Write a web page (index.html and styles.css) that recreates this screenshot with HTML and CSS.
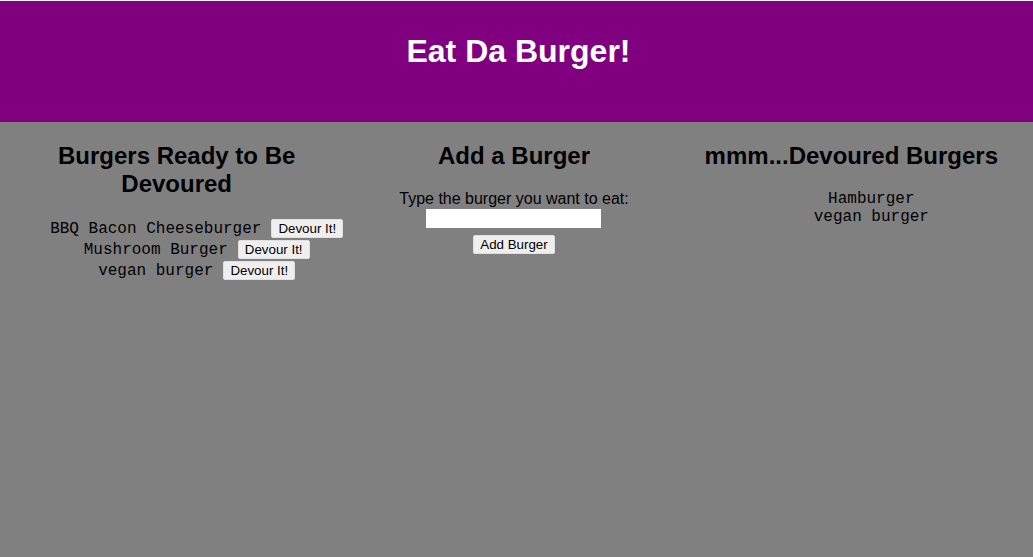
FILE: index.html
```html
<!DOCTYPE html>
<html>
<head>
<meta charset="utf-8">
<title>Eat Da Burger!</title>
<link rel="stylesheet" href="styles.css">
</head>
<body>
<header class="jumbotron">
  <h1 class="title">Eat Da Burger!</h1>
</header>
<main class="columns">
  <section class="col">
    <h2 class="col-title">Burgers Ready to Be Devoured</h2>
    <ul class="burger-list">
      <li class="burger-row"><span class="burger-name">BBQ Bacon Cheeseburger</span><button class="btn">Devour It!</button></li>
      <li class="burger-row"><span class="burger-name">Mushroom Burger</span><button class="btn">Devour It!</button></li>
      <li class="burger-row"><span class="burger-name">vegan burger</span><button class="btn">Devour It!</button></li>
    </ul>
  </section>
  <section class="col">
    <h2 class="col-title">Add a Burger</h2>
    <form class="add-form">
      <label class="add-label" for="burger">Type the burger you want to eat:</label>
      <input class="add-input" id="burger" type="text">
      <button class="btn" type="button">Add Burger</button>
    </form>
  </section>
  <section class="col">
    <h2 class="col-title">mmm...Devoured Burgers</h2>
    <ul class="eaten-list">
      <li class="eaten-item">Hamburger</li>
      <li class="eaten-item">vegan burger</li>
    </ul>
  </section>
</main>
</body>
</html>
```

FILE: styles.css
```css
html, body {
  margin: 0;
  padding: 0;
}
body {
  background: #808080;
  font-family: "Liberation Sans", Arial, sans-serif;
  color: #000;
  min-height: 100vh;
  border-top: 1px solid #f2f2f2;
  box-sizing: border-box;
}
.jumbotron {
  background: #800080;
  height: 121px;
  display: flex;
  justify-content: center;
  padding-left: 4px;
}
.title {
  margin: 32px 0 0;
  font-size: 32px;
  line-height: 37px;
  font-weight: bold;
  color: #fff;
}
.columns {
  display: grid;
  grid-template-columns: repeat(3, minmax(0, 1fr));
  padding: 0 13px 0 8px;
}
.col {
  text-align: center;
  min-width: 0;
}
.col-title {
  font-size: 24px;
  line-height: 28px;
  font-weight: bold;
  margin: 20px 0 20px;
}
.burger-list, .eaten-list {
  list-style: none;
  margin: 0;
  padding: 0 0 0 40px;
}
.burger-row {
  display: flex;
  justify-content: center;
  align-items: center;
  gap: 10px;
  height: 21px;
  white-space: nowrap;
}
.burger-row > * {
  flex-shrink: 0;
}
.burger-name, .eaten-item {
  font-family: "Liberation Mono", "Courier New", monospace;
  font-size: 16px;
  line-height: 18px;
}
.btn {
  font-family: "Liberation Sans", Arial, sans-serif;
  font-size: 13.33px;
  line-height: 15px;
  background: #efefef;
  color: #000;
  border: 1px solid #e0e0e0;
  border-radius: 2px;
  padding: 1px 6px;
  height: 19px;
  white-space: nowrap;
}
.add-form {
  display: flex;
  flex-direction: column;
  align-items: center;
}
.add-label {
  font-size: 16px;
  line-height: 18px;
}
.add-input {
  width: 175px;
  height: 19px;
  box-sizing: border-box;
  border: none;
  background: #fff;
  margin: 1px 0 7px;
}
```
